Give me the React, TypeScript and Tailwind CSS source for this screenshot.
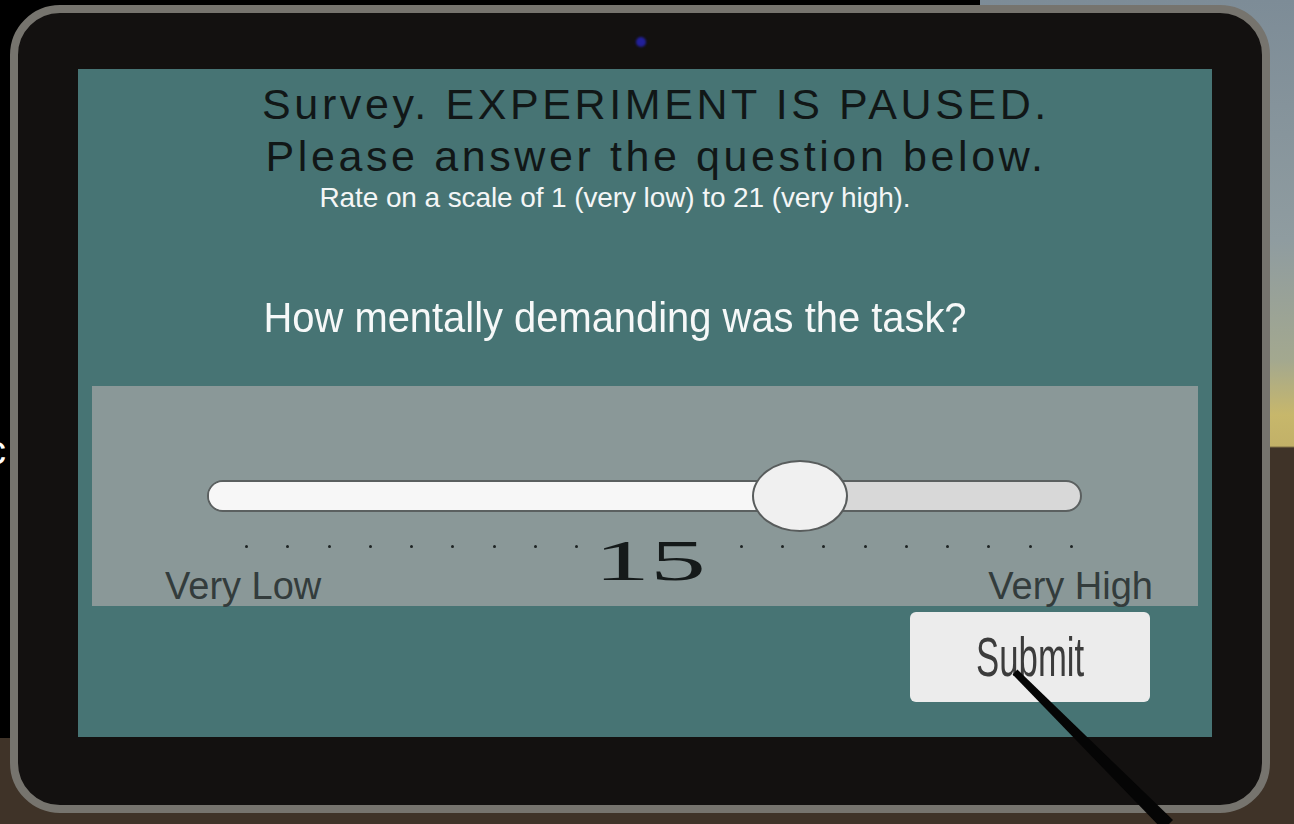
import React from 'react'

const MIN = 1
const MAX = 21
const VALUE = 15

// centre of the handle; it travels inside the track, inset by half its width
function handlePos(value: number) {
  const t = (value - MIN) / (MAX - MIN)
  return `calc(48px + ${t} * (100% - 96px))`
}

function RatingSlider({ value }: { value: number }) {
  const left = handlePos(value)
  return (
    <div className="relative ml-[115px] h-[32px] w-[875px]">
      <div className="flex h-full w-full overflow-hidden rounded-full border-2 border-[#5b6060] bg-[#d8d8d8]">
        <div className="h-full bg-[#f7f7f7]" style={{ width: left }} />
      </div>
      <div
        className="absolute top-1/2 h-[72px] w-[96px] -translate-x-1/2 -translate-y-1/2 rounded-[50%] border-2 border-[#585c5c] bg-[#f0f0f0]"
        style={{ left }}
      />
    </div>
  )
}

function Dot() {
  return (
    <div className="flex justify-center pt-[14px]">
      <div className="h-[3px] w-[3px] rounded-full bg-[#1e2424]" />
    </div>
  )
}

function TickRow({ value }: { value: number }) {
  const before = Array.from({ length: 9 })
  const after = Array.from({ length: 9 })
  return (
    <div className="mt-[19px] ml-[134px] grid h-[35px] w-[866px] grid-cols-[repeat(21,minmax(0,1fr))]">
      {before.map((_, i) => (
        <Dot key={`b${i}`} />
      ))}
      <div className="col-span-3 flex justify-center">
        <span className="inline-block -translate-x-[9px] translate-y-[2px] scale-x-[2] font-['Liberation_Serif',serif] text-[56px] leading-[56px] text-[#151a1a]">
          {value}
        </span>
      </div>
      {after.map((_, i) => (
        <Dot key={`a${i}`} />
      ))}
    </div>
  )
}

export default function App() {
  return (
    <div className="relative h-[824px] w-[1294px] overflow-hidden bg-[linear-gradient(to_bottom,#7d8c97_0px,#8f9ca0_240px,#a3a88f_360px,#c7b76b_415px,#c2b168_446px,#3f3328_448px,#3f3328_100%)] font-['Liberation_Sans',Arial,sans-serif]">
      {/* dark billboard behind the tablet */}
      <div className="absolute left-0 top-0 h-[738px] w-[980px] bg-black">
        <span className="absolute left-[-14px] top-[426px] text-[40px] leading-[48px] text-white">c</span>
      </div>

      <div className="relative ml-[10px] mt-[5px] box-border h-[808px] w-[1260px] rounded-[50px] border-[8px] border-[#76746e] bg-[#131110] pb-[68px] pl-[60px] pr-[50px] pt-[56px]">
        <div className="absolute left-[618px] top-[24px] h-[10px] w-[10px] rounded-full bg-[#22209a] blur-[1px]" />

        <div className="flex h-full w-full flex-col bg-[#477474] pt-[9px]">
          <div className="pl-[22px] text-center text-[43px] leading-[52px] tracking-[3.6px] text-[#111717]">
            <div>Survey. EXPERIMENT IS PAUSED.</div>
            <div>Please answer the question below.</div>
          </div>

          <div className="pr-[60px] text-center text-[28px] leading-[32px] tracking-[-0.1px] text-[#f4f6f6]">
            Rate on a scale of 1 (very low) to 21 (very high).
          </div>

          <div className="mt-[80px] pr-[60px] text-center text-[42px] leading-[48px] text-[#f6f8f8]">
            <span className="inline-block scale-x-[0.95]">How mentally demanding was the task?</span>
          </div>

          <div className="mx-[14px] mt-[44px] flex h-[220px] flex-col bg-[#8a9898] pt-[94px]">
            <RatingSlider value={VALUE} />
            <TickRow value={VALUE} />
            <div className="flex h-[40px] items-start justify-between pl-[73px] pr-[45px] text-[38px] leading-[40px] text-[#333c3c]">
              <span>Very Low</span>
              <span>Very High</span>
            </div>
          </div>

          <div className="mr-[62px] mt-[6px] flex justify-end">
            <button className="flex h-[90px] w-[240px] items-center justify-center rounded-[6px] bg-[#ececec]">
              <span className="inline-block scale-x-[0.62] text-[56px] leading-[60px] text-[#3c3c3c]">Submit</span>
            </button>
          </div>
        </div>
      </div>

      {/* controller pointer ray */}
      <svg className="pointer-events-none absolute left-0 top-0" width="1294" height="824" viewBox="0 0 1294 824">
        <path d="M1017.4 669.6 L1012.6 674.4 L1163 830 L1173 820 Z" fill="#050505" />
      </svg>
    </div>
  )
}
